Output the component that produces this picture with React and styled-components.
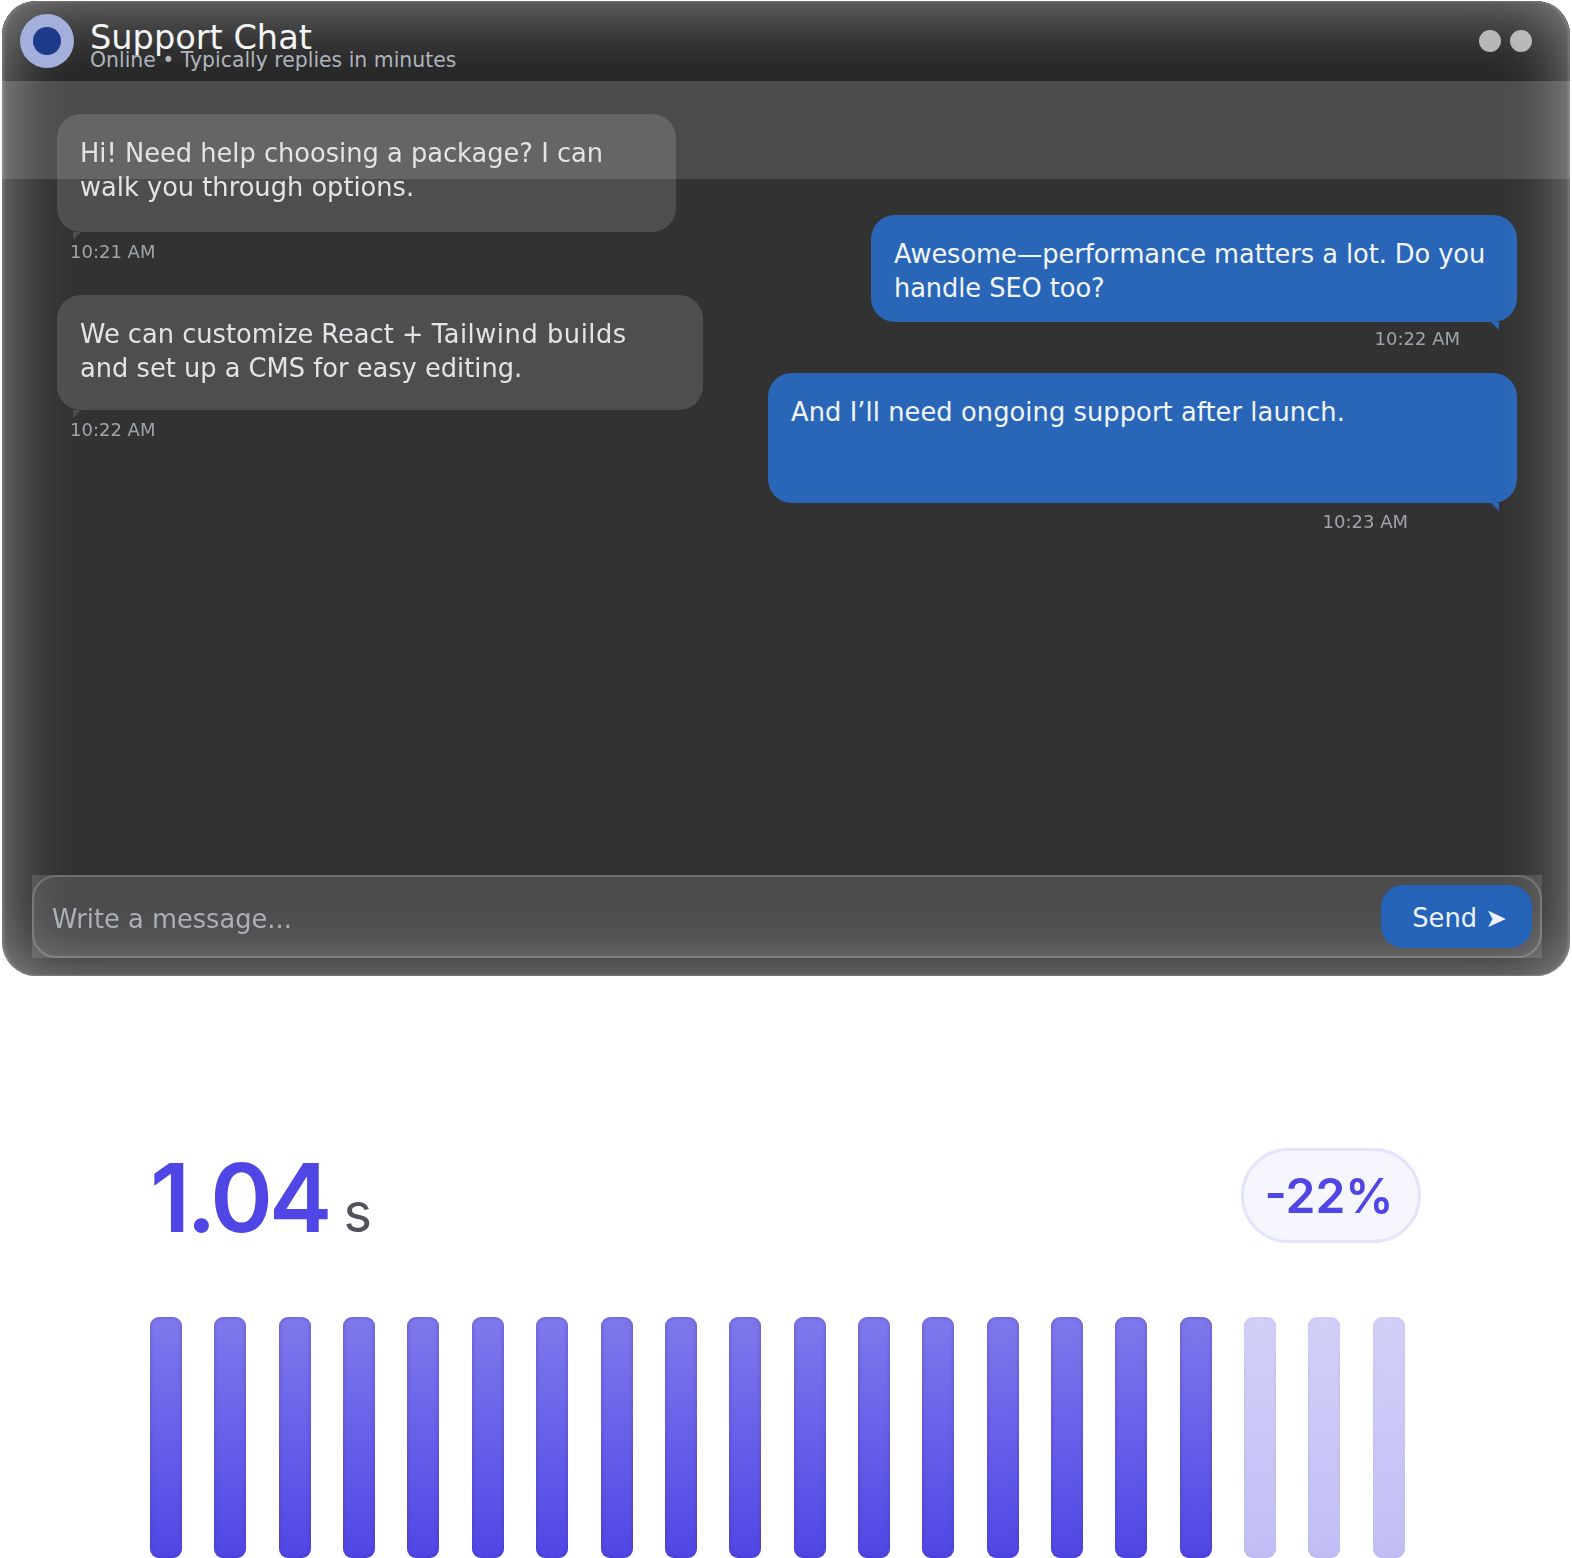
import React from "react";
import styled, { createGlobalStyle } from "styled-components";

const GlobalStyle = createGlobalStyle`
  html, body {
    margin: 0;
    background: #fff;
  }
`;

const Page = styled.div`
  width: 1572px;
  height: 1558px;
  overflow: hidden;
  padding: 1px 2px 0;
  box-sizing: border-box;
  filter: blur(0.4px);
`;

const ChatWindow = styled.section`
  position: relative;
  display: flex;
  flex-direction: column;
  height: 975px;
  border-radius: 34px;
  overflow: hidden;
  background: #323232;
  font-family: "DejaVu Sans", sans-serif;
  &::after {
    content: "";
    position: absolute;
    inset: 0;
    border-radius: 34px;
    box-shadow:
      inset 2px 0 3px rgba(255, 255, 255, 0.18),
      inset -2px 0 3px rgba(255, 255, 255, 0.18),
      inset 0 0 66px rgba(255, 255, 255, 0.46);
    pointer-events: none;
  }
`;

const Header = styled.header`
  display: flex;
  align-items: center;
  height: 80px;
  flex-shrink: 0;
  padding: 0 38px 0 18px;
  box-sizing: border-box;
  background: linear-gradient(#2e2e2e, #2e2e2e 40%, #272727);
  border-bottom: 1px solid #262626;
`;

const Avatar = styled.div`
  position: relative;
  z-index: 1;
  width: 54px;
  height: 54px;
  border-radius: 50%;
  background: #a4b0dc;
  display: flex;
  align-items: center;
  justify-content: center;
  margin-right: 16px;
  &::after {
    content: "";
    width: 28px;
    height: 28px;
    border-radius: 50%;
    background: #1e3a8a;
  }
`;

const TitleBlock = styled.div`
  flex: 1;
  padding-top: 10px;
`;

const Title = styled.div`
  font-size: 33.6px;
  line-height: 36px;
  color: #f3f4f6;
`;

const Subtitle = styled.div`
  font-size: 20.4px;
  line-height: 22px;
  margin-top: -7px;
  color: #aeb4bd;
`;

const Dots = styled.div`
  display: flex;
  gap: 9px;
`;

const Dot = styled.span`
  width: 22px;
  height: 22px;
  border-radius: 50%;
  background: #b4b4b4;
`;

const Band = styled.div`
  position: absolute;
  left: 0;
  right: 0;
  top: 80px;
  height: 98px;
  background: rgba(255, 255, 255, 0.13);
  pointer-events: none;
`;

const Thread = styled.div`
  position: relative;
  flex: 1;
  display: flex;
  justify-content: space-between;
  padding: 33px 53px 0 55px;
`;

const Column = styled.div`
  display: flex;
  flex-direction: column;
  align-items: ${({ $side }) => ($side === "right" ? "flex-end" : "flex-start")};
  padding-top: ${({ $top }) => $top || 0}px;
`;

const Bubble = styled.div`
  position: relative;
  box-sizing: border-box;
  width: ${({ $w }) => $w}px;
  height: ${({ $h }) => $h}px;
  padding: 23px 23px 0;
  font-size: 25.7px;
  line-height: 33.5px;
  letter-spacing: ${({ $track }) => $track || 0}px;
  border-radius: 24px;
  color: ${({ $side }) => ($side === "right" ? "#f2f6fc" : "#e2e4e8")};
  background: ${({ $side }) => ($side === "right" ? "#2a66b8" : "rgba(255, 255, 255, 0.14)")};
  &::after {
    content: "";
    position: absolute;
    top: 100%;
    width: 8px;
    height: 8px;
    background: inherit;
    ${({ $side }) =>
      $side === "right"
        ? "right: 18px; clip-path: polygon(0 0, 100% 0, 100% 100%);"
        : "left: 16px; clip-path: polygon(0 0, 100% 0, 0 100%);"}
  }
`;

const Wider = styled.span`
  letter-spacing: 0.55px;
`;

const Time = styled.div`
  font-size: 18px;
  line-height: 22px;
  color: #a0a4ab;
  margin-top: ${({ $mt }) => $mt}px;
  margin-bottom: ${({ $mb }) => $mb}px;
  margin-left: ${({ $side }) => ($side === "right" ? 0 : 13)}px;
  margin-right: ${({ $mr }) => $mr || 0}px;
`;

const Composer = styled.div`
  position: relative;
  display: flex;
  align-items: center;
  justify-content: space-between;
  height: 83px;
  margin: 0 28px 18px 30px;
  padding: 0 10px 0 20px;
  box-sizing: border-box;
  flex-shrink: 0;
  background: rgba(255, 255, 255, 0.13);
  &::before {
    content: "";
    position: absolute;
    inset: 0;
    border: 2px solid #6e6e6e;
    border-radius: 24px;
    pointer-events: none;
  }
`;

const Placeholder = styled.span`
  font-size: 25.7px;
  line-height: 32px;
  padding-top: 5px;
  color: #a9aeb8;
`;

const SendButton = styled.button`
  position: relative;
  z-index: 1;
  width: 151px;
  height: 63px;
  padding: 2px 0 0 6px;
  border: 0;
  border-radius: 22px;
  background: #2563b8;
  color: #eef3fb;
  font-family: inherit;
  font-size: 25.7px;
`;

const Stats = styled.section`
  font-family: Inter, sans-serif;
  padding: 172px 149px 0 148px;
`;

const StatRow = styled.div`
  display: flex;
  justify-content: space-between;
  align-items: flex-start;
  height: 169px;
`;

const Value = styled.div`
  display: flex;
  align-items: baseline;
  gap: 15px;
  font-size: 95px;
  line-height: 100px;
  font-weight: 600;
  letter-spacing: -3.8px;
  color: #4f46e5;
`;

const Unit = styled.span`
  font-size: 54px;
  font-weight: 400;
  letter-spacing: 0;
  color: #52525b;
`;

const Pill = styled.div`
  width: 180px;
  height: 95px;
  box-sizing: border-box;
  padding-right: 4px;
  border: 3px solid #e4e3fb;
  border-radius: 48px;
  background: #f6f6fe;
  color: #4f46e5;
  font-size: 48px;
  font-weight: 600;
  display: flex;
  align-items: center;
  justify-content: center;
`;

const Bars = styled.div`
  display: flex;
  justify-content: space-between;
  width: 1255px;
`;

const Bar = styled.div`
  width: 32px;
  height: 241px;
  flex-shrink: 0;
  border-radius: 9px;
  background: linear-gradient(#7f79ec, #4f46e5);
  box-shadow: inset 0 0 4px rgba(60, 50, 140, 0.45);
  opacity: ${({ $dim }) => ($dim ? 0.35 : 1)};
`;

const barStates = Array.from({ length: 20 }, (_, i) => i >= 17);

export default function App() {
  return (
    <Page>
      <GlobalStyle />
      <ChatWindow>
        <Header>
          <Avatar />
          <TitleBlock>
            <Title>Support Chat</Title>
            <Subtitle>Online • Typically replies in minutes</Subtitle>
          </TitleBlock>
          <Dots>
            <Dot />
            <Dot />
          </Dots>
        </Header>
        <Band />
        <Thread>
          <Column>
            <Bubble $w={619} $h={118}>
              Hi! Need help choosing a package? I can walk you through options.
            </Bubble>
            <Time $mt={9} $mb={32}>10:21 AM</Time>
            <Bubble $w={646} $h={115}>
              We can customize React + <Wider>Tailwind builds</Wider>
              <br />
              and set up a CMS for easy editing.
            </Bubble>
            <Time $mt={9}>10:22 AM</Time>
          </Column>
          <Column $side="right" $top={101}>
            <Bubble $side="right" $w={646} $h={107} $track={-0.08}>
              Awesome—performance matters a lot. Do you handle SEO too?
            </Bubble>
            <Time $side="right" $mt={6} $mb={23} $mr={57}>10:22 AM</Time>
            <Bubble $side="right" $w={749} $h={130} $track={0.08}>
              And I’ll need ongoing support after launch.
            </Bubble>
            <Time $side="right" $mt={8} $mr={109}>10:23 AM</Time>
          </Column>
        </Thread>
        <Composer>
          <Placeholder>Write a message...</Placeholder>
          <SendButton>Send ➤</SendButton>
        </Composer>
      </ChatWindow>
      <Stats>
        <StatRow>
          <Value>
            1.04<Unit>s</Unit>
          </Value>
          <Pill>-22%</Pill>
        </StatRow>
        <Bars>
          {barStates.map((dim, i) => (
            <Bar key={i} $dim={dim} />
          ))}
        </Bars>
      </Stats>
    </Page>
  );
}
